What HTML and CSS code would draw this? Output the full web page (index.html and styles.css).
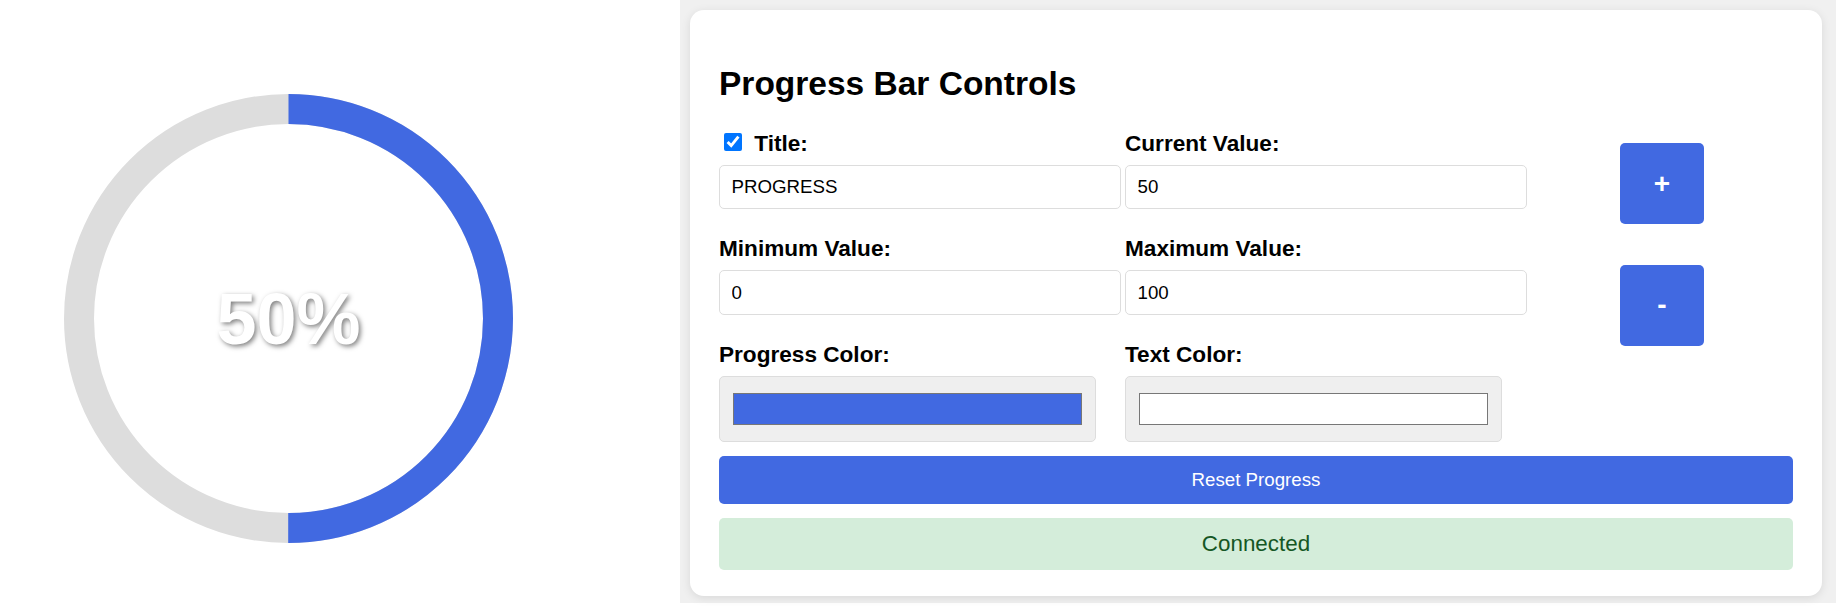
FILE: index.html
```html
<!DOCTYPE html>
<html lang="en">
<head>
<meta charset="utf-8">
<title>Progress Bar Controls</title>
<link rel="stylesheet" href="styles.css">
</head>
<body>
<div class="app">
  <section class="preview">
    <div class="ring">
      <svg class="ring-svg" width="449" height="449" viewBox="0 0 449 449">
        <circle cx="224.5" cy="224.5" r="209.5" fill="none" stroke="#dddddd" stroke-width="30"/>
        <circle cx="224.5" cy="224.5" r="209.5" fill="none" stroke="#4169e1" stroke-width="30" stroke-dasharray="658.2 1316.4" transform="rotate(-90 224.5 224.5)"/>
      </svg>
      <div class="ring-text">50%</div>
    </div>
  </section>
  <section class="panel">
    <div class="card">
      <h2 class="card-title">Progress Bar Controls</h2>
      <div class="grid">
        <div class="field">
          <label class="label"><input class="check" type="checkbox" checked> Title:</label>
          <input class="text-input" type="text" value="PROGRESS">
        </div>
        <div class="field">
          <label class="label">Current Value:</label>
          <input class="text-input" type="text" value="50">
        </div>
        <div class="steppers">
          <button class="step-btn">+</button>
          <button class="step-btn">-</button>
        </div>
        <div class="field">
          <label class="label">Minimum Value:</label>
          <input class="text-input" type="text" value="0">
        </div>
        <div class="field">
          <label class="label">Maximum Value:</label>
          <input class="text-input" type="text" value="100">
        </div>
        <div class="field">
          <label class="label">Progress Color:</label>
          <input class="color-input" type="color" value="#4169e1">
        </div>
        <div class="field">
          <label class="label">Text Color:</label>
          <input class="color-input" type="color" value="#ffffff">
        </div>
      </div>
      <button class="reset-btn">Reset Progress</button>
      <div class="status">Connected</div>
    </div>
  </section>
</div>
</body>
</html>
```

FILE: styles.css
```css
* {
  box-sizing: border-box;
}

html, body {
  margin: 0;
  padding: 0;
  background: #ffffff;
  font-family: "Liberation Sans", Arial, sans-serif;
  color: #000;
}

.app {
  display: flex;
  width: 1836px;
  height: 614px;
  align-items: flex-start;
}

.preview {
  width: 680px;
  flex: 0 0 680px;
  padding: 94px 0 0 64px;
}

.ring {
  position: relative;
  width: 449px;
  height: 449px;
}

.ring-svg {
  display: block;
}

.ring-text {
  position: absolute;
  inset: 0;
  display: flex;
  align-items: center;
  justify-content: center;
  font-size: 72px;
  font-weight: bold;
  color: #ffffff;
  text-shadow: 2px 2px 5px rgba(0, 0, 0, 0.5);
}

.panel {
  flex: 1;
  height: 603px;
  background: #f0f0f0;
  padding: 10px 14px 0 10px;
}

.card {
  background: #ffffff;
  border-radius: 14px;
  box-shadow: 0 2px 10px rgba(0, 0, 0, 0.1);
  padding: 29px 29px 26px 29px;
}

.card-title {
  margin: 26px 0 28px 0;
  font-size: 33.5px;
  font-weight: bold;
  line-height: normal;
}

.grid {
  display: grid;
  grid-template-columns: 402px 402px 1fr;
  column-gap: 4px;
  row-gap: 27px;
}

.field {
  display: flex;
  flex-direction: column;
  align-items: flex-start;
}

.label {
  display: block;
  font-size: 22.6px;
  font-weight: bold;
  line-height: normal;
  margin-bottom: 8px;
}

.check {
  width: 18px;
  height: 18px;
  margin: 0 6px 0 5px;
  vertical-align: baseline;
}

.text-input {
  width: 402px;
  height: 44.4px;
  padding: 0 11.5px;
  border: 1px solid #dddddd;
  border-radius: 5px;
  font-family: "Liberation Sans", Arial, sans-serif;
  font-size: 18.7px;
  color: #000;
  background: #fff;
  outline: none;
}

.color-input {
  -webkit-appearance: none;
  appearance: none;
  width: 377px;
  height: 66.5px;
  padding: 0;
  border: 1px solid #dddddd;
  border-radius: 5px;
  background: #efefef;
  cursor: pointer;
}

.color-input::-webkit-color-swatch-wrapper {
  padding: 16px 13px;
}

.color-input::-webkit-color-swatch {
  border: 1px solid #777777;
  border-radius: 0;
}

.steppers {
  grid-column: 3;
  grid-row: 1 / span 3;
  display: flex;
  flex-direction: column;
  align-items: center;
  gap: 40.4px;
  padding-top: 12.3px;
}

.step-btn {
  width: 84.5px;
  height: 81px;
  border: none;
  border-radius: 5px;
  background: #4169e1;
  color: #ffffff;
  font-family: "Liberation Sans", Arial, sans-serif;
  font-size: 28px;
  font-weight: bold;
  padding: 0;
  cursor: pointer;
}

.reset-btn {
  display: block;
  width: 100%;
  height: 48px;
  margin-top: 14px;
  border: none;
  border-radius: 5px;
  background: #4169e1;
  color: #ffffff;
  font-family: "Liberation Sans", Arial, sans-serif;
  font-size: 18.7px;
  cursor: pointer;
}

.status {
  margin-top: 14px;
  height: 52px;
  display: flex;
  align-items: center;
  justify-content: center;
  background: #d4edda;
  color: #155724;
  border-radius: 5px;
  font-size: 22.4px;
}
```
